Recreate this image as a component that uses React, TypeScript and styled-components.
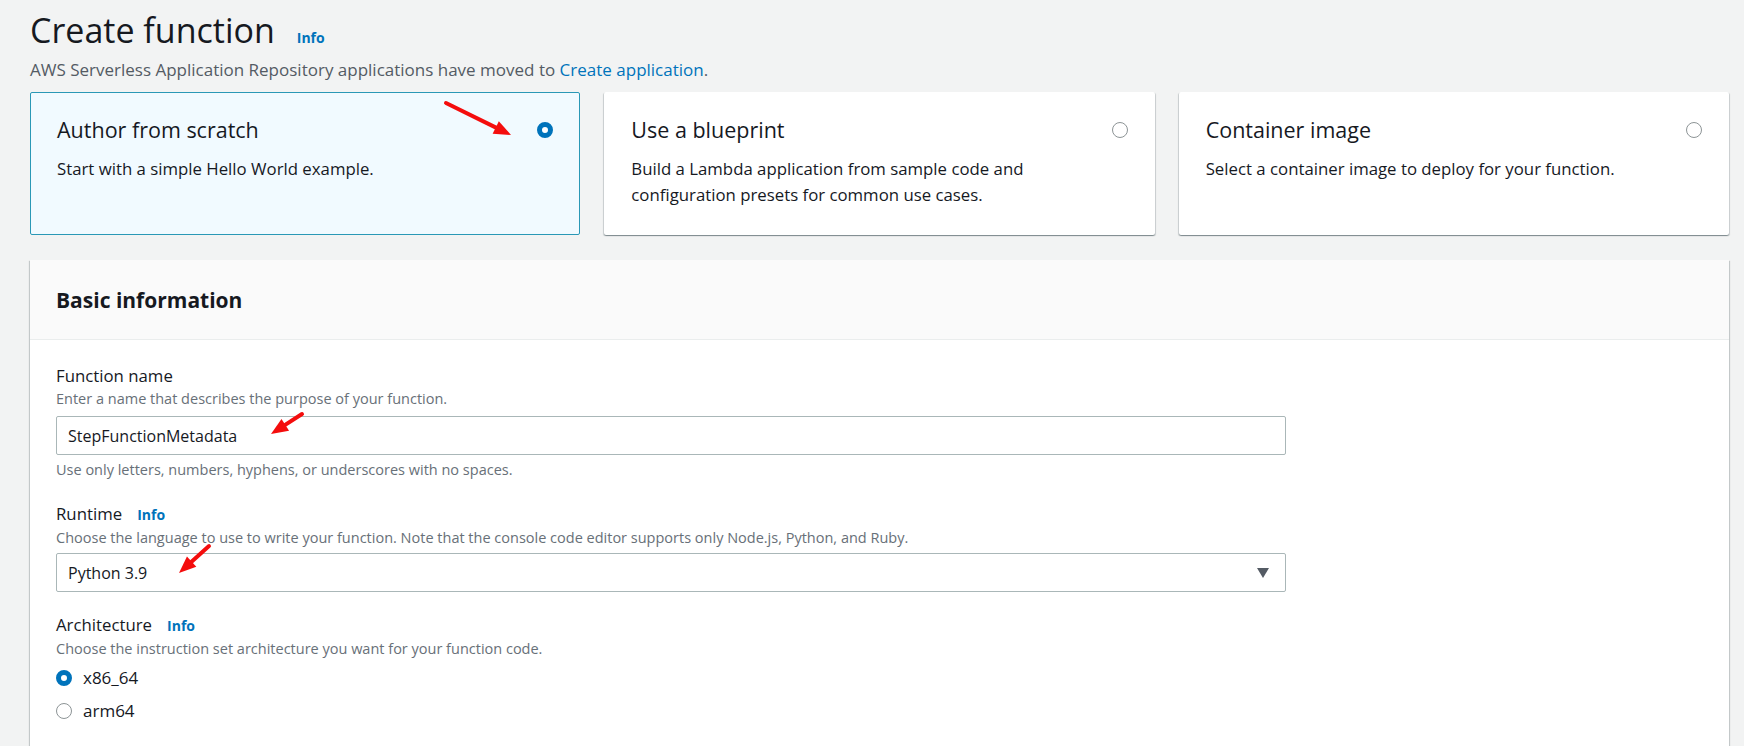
import styled, { createGlobalStyle } from "styled-components";

const GlobalStyle = createGlobalStyle`
  html, body {
    margin: 0;
    padding: 0;
    background: #f2f3f3;
  }
  body {
    font-family: "Open Sans", Roboto, sans-serif;
    color: #16191f;
  }
  * {
    box-sizing: border-box;
  }
`;

const Page = styled.div`
  position: relative;
  width: 1744px;
  height: 746px;
  overflow: hidden;
  padding: 10px 15px 0 30px;
`;

const TitleRow = styled.div`
  display: flex;
  align-items: baseline;
  gap: 22px;
`;

const Title = styled.h1`
  margin: 0;
  font-size: 34px;
  line-height: 40px;
  font-weight: 400;
  color: #16191f;
`;

const InfoLink = styled.a`
  font-size: 14px;
  font-weight: 700;
  color: #0073bb;
  text-decoration: none;
`;

const Subtitle = styled.p`
  margin: 8px 0 0;
  font-size: 17px;
  line-height: 24px;
  color: #545b64;
`;

const Link = styled.a`
  color: #0073bb;
  text-decoration: none;
`;

const Tiles = styled.div`
  display: grid;
  grid-template-columns: repeat(3, 1fr);
  gap: 24px;
  margin-top: 10px;
`;

const Tile = styled.div<{ $selected?: boolean }>`
  min-height: 143px;
  padding: 22px 26px;
  border-radius: 2px;
  border: 1px solid ${(p) => (p.$selected ? "#2a98b6" : "transparent")};
  background: ${(p) => (p.$selected ? "#f1faff" : "#ffffff")};
  box-shadow: ${(p) =>
    p.$selected
      ? "none"
      : "0 1px 1px 0 rgba(0,28,36,.3), 1px 1px 1px 0 rgba(0,28,36,.15), -1px 1px 1px 0 rgba(0,28,36,.15)"};
`;

const TileHead = styled.div`
  display: flex;
  align-items: center;
  justify-content: space-between;
`;

const TileTitle = styled.div`
  font-size: 21.5px;
  line-height: 30px;
`;

const TileText = styled.div`
  margin-top: 11px;
  font-size: 16.8px;
  line-height: 26px;
  max-width: 420px;
`;

const Radio = styled.span<{ $checked?: boolean }>`
  flex: none;
  display: inline-block;
  width: 16px;
  height: 16px;
  border-radius: 50%;
  background: #fff;
  border: ${(p) => (p.$checked ? "5px solid #0073bb" : "1.5px solid #8d9496")};
`;

const Panel = styled.div`
  margin-top: 25px;
  background: #fff;
  box-shadow: 0 1px 1px 0 rgba(0, 28, 36, 0.3),
    1px 1px 1px 0 rgba(0, 28, 36, 0.15), -1px 1px 1px 0 rgba(0, 28, 36, 0.15);
`;

const PanelHeader = styled.div`
  height: 80px;
  display: flex;
  align-items: center;
  padding: 0 26px;
  background: #fafafa;
  border-bottom: 1px solid #eaeded;
`;

const PanelTitle = styled.h2`
  margin: 0;
  font-size: 21px;
  font-weight: 700;
  line-height: 28px;
`;

const PanelBody = styled.div`
  padding: 24px 26px 40px;
`;

const Field = styled.div`
  & + & {
    margin-top: 21px;
  }
`;

const Label = styled.div`
  display: flex;
  align-items: baseline;
  gap: 15px;
  font-size: 16.8px;
  line-height: 24px;
`;

const Hint = styled.div<{ $gap?: number }>`
  margin-top: ${(p) => p.$gap || 0}px;
  font-size: 14.5px;
  line-height: 22px;
  color: #687078;
`;

const Control = styled.div<{ $gap?: number }>`
  margin-top: ${(p) => p.$gap ?? 6}px;
  width: 1230px;
  height: 39px;
  display: flex;
  align-items: center;
  justify-content: space-between;
  padding: 0 16px 0 11px;
  border: 1px solid #aab7b8;
  border-radius: 2px;
  background: #fff;
  font-size: 16px;
  color: #16191f;
`;

const Caret = styled.span`
  width: 0;
  height: 0;
  border-left: 6px solid transparent;
  border-right: 6px solid transparent;
  border-top: 10px solid #545b64;
`;

const Options = styled.div`
  margin-top: 1px;
  display: flex;
  flex-direction: column;
`;

const Option = styled.label`
  height: 33px;
  display: flex;
  align-items: center;
  gap: 11px;
  font-size: 17px;
`;

const Overlay = styled.svg`
  position: absolute;
  left: 0;
  top: 0;
  pointer-events: none;
`;

const arrows = [
  { tx: 446, ty: 103, px: 511, py: 135 },
  { tx: 302, ty: 414, px: 271, py: 434 },
  { tx: 209, ty: 546, px: 179, py: 573 },
];

const Arrow = ({ tx, ty, px, py }: { tx: number; ty: number; px: number; py: number }) => {
  const len = Math.hypot(px - tx, py - ty);
  const dx = (px - tx) / len;
  const dy = (py - ty) / len;
  const head = 17;
  const half = 7;
  const bx = px - dx * head;
  const by = py - dy * head;
  const pts = `${px},${py} ${bx - dy * half},${by + dx * half} ${bx + dy * half},${by - dx * half}`;
  return (
    <g>
      <line x1={tx} y1={ty} x2={bx + dx * 2} y2={by + dy * 2} stroke="#f40d0d" strokeWidth={4} strokeLinecap="round" />
      <polygon points={pts} fill="#f40d0d" />
    </g>
  );
};

const tiles = [
  { title: "Author from scratch", text: "Start with a simple Hello World example.", selected: true },
  {
    title: "Use a blueprint",
    text: "Build a Lambda application from sample code and configuration presets for common use cases.",
  },
  { title: "Container image", text: "Select a container image to deploy for your function." },
];

const App = () => {
  return (
    <Page>
      <GlobalStyle />
      <TitleRow>
        <Title>Create function</Title>
        <InfoLink>Info</InfoLink>
      </TitleRow>
      <Subtitle>
        AWS Serverless Application Repository applications have moved to{" "}
        <Link>Create application</Link>.
      </Subtitle>
      <Tiles>
        {tiles.map((t) => (
          <Tile key={t.title} $selected={t.selected}>
            <TileHead>
              <TileTitle>{t.title}</TileTitle>
              <Radio $checked={t.selected} />
            </TileHead>
            <TileText>{t.text}</TileText>
          </Tile>
        ))}
      </Tiles>
      <Panel>
        <PanelHeader>
          <PanelTitle>Basic information</PanelTitle>
        </PanelHeader>
        <PanelBody>
          <Field>
            <Label>Function name</Label>
            <Hint>Enter a name that describes the purpose of your function.</Hint>
            <Control>StepFunctionMetadata</Control>
            <Hint $gap={4}>Use only letters, numbers, hyphens, or underscores with no spaces.</Hint>
          </Field>
          <Field>
            <Label>
              Runtime <InfoLink>Info</InfoLink>
            </Label>
            <Hint>
              Choose the language to use to write your function. Note that the console code editor supports only
              Node.js, Python, and Ruby.
            </Hint>
            <Control $gap={4}>
              Python 3.9
              <Caret />
            </Control>
          </Field>
          <Field>
            <Label>
              Architecture <InfoLink>Info</InfoLink>
            </Label>
            <Hint>Choose the instruction set architecture you want for your function code.</Hint>
            <Options>
              <Option>
                <Radio $checked />
                x86_64
              </Option>
              <Option>
                <Radio />
                arm64
              </Option>
            </Options>
          </Field>
        </PanelBody>
      </Panel>
      <Overlay width={1744} height={746}>
        {arrows.map((a, i) => (
          <Arrow key={i} {...a} />
        ))}
      </Overlay>
    </Page>
  );
};

export default App;
